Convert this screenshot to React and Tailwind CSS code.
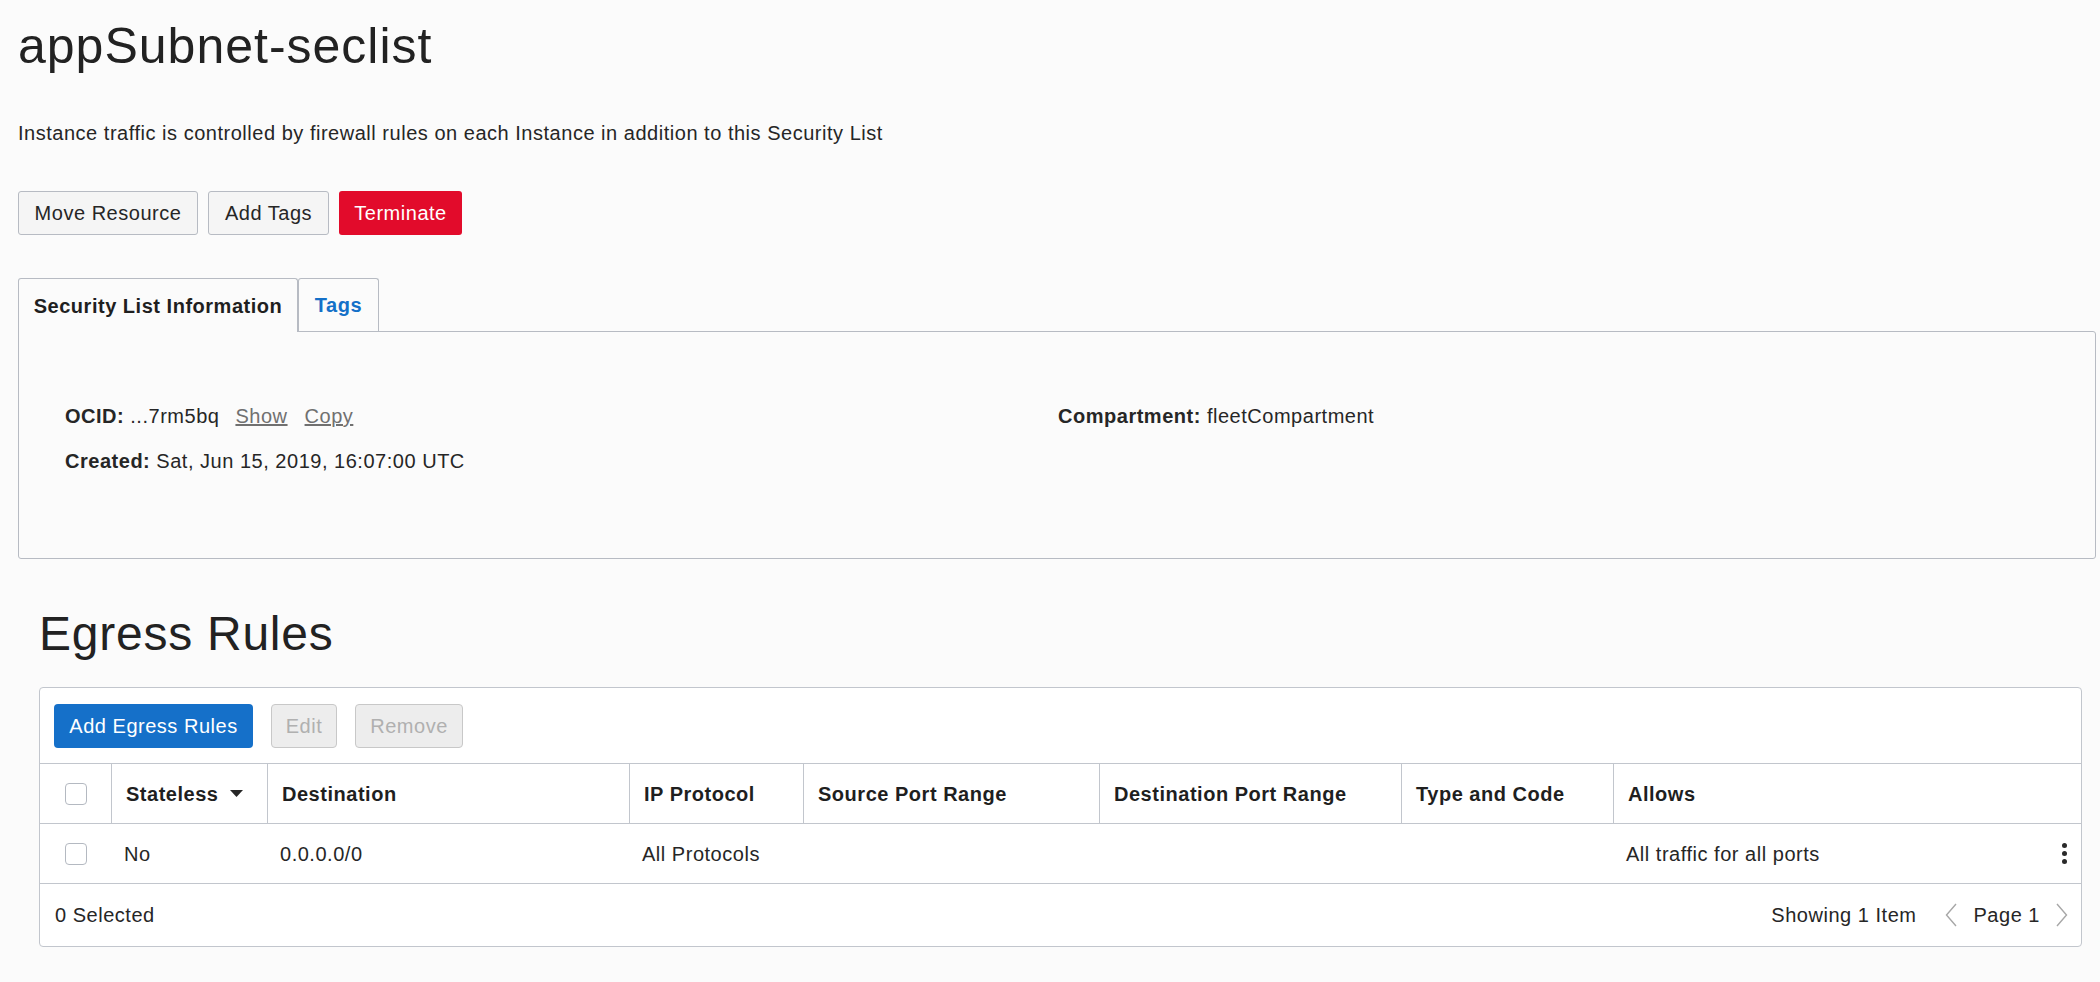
import React from "react";

const Checkbox = () => (
  <span className="block w-[22px] h-[22px] rounded-[4px] border border-[#b4b9c1] bg-white"></span>
);

const Chevron = ({ dir }) => (
  <svg width="12" height="24" viewBox="0 0 12 24" fill="none">
    <path
      d={dir === "left" ? "M11 1 L1.5 12 L11 23" : "M1 1 L10.5 12 L1 23"}
      stroke="#a7a7a7"
      strokeWidth="1.4"
    />
  </svg>
);

const columns = [
  { label: "Stateless", width: "w-[156px]", sort: true },
  { label: "Destination", width: "w-[362px]" },
  { label: "IP Protocol", width: "w-[174px]" },
  { label: "Source Port Range", width: "w-[296px]" },
  { label: "Destination Port Range", width: "w-[302px]" },
  { label: "Type and Code", width: "w-[212px]" },
];

const App = () => {
  return (
    <div className="min-h-screen bg-[#fbfbfb] text-[#262626] font-['Liberation_Sans',Arial,sans-serif] tracking-[0.52px]">
      <div className="pl-[18px] pr-[4px]">
        <h1 className="pt-[17px] text-[50px] leading-[58px] tracking-[1px] text-[#222]">
          appSubnet-seclist
        </h1>
        <p className="mt-[46px] text-[20px] leading-[24px]">
          Instance traffic is controlled by firewall rules on each Instance in addition to this Security List
        </p>

        <div className="mt-[46px] flex gap-[10px]">
          <button className="w-[180px] h-[44px] rounded-[3px] border border-[#b7bbc3] bg-[#f5f5f5] text-[20px] text-[#262626]">
            Move Resource
          </button>
          <button className="w-[121px] h-[44px] rounded-[3px] border border-[#b7bbc3] bg-[#f5f5f5] text-[20px] text-[#262626]">
            Add Tags
          </button>
          <button className="w-[123px] h-[44px] rounded-[3px] bg-[#e20b2b] text-[20px] text-white">
            Terminate
          </button>
        </div>

        <div className="mt-[43px] flex">
          <div className="relative z-10 -mb-px w-[280px] h-[54px] flex items-center justify-center rounded-t-[3px] border-t border-l border-r border-[#b7bbc3] bg-[#fbfbfb] text-[20px] font-bold text-[#1f1f1f]">
            Security List Information
          </div>
          <div className="w-[81px] h-[53px] flex items-center justify-center rounded-t-[3px] border-t border-l border-r border-[#b7bbc3] text-[20px] font-bold text-[#1470c8]">
            Tags
          </div>
        </div>
        <div className="border border-[#b7bbc3] rounded-b-[3px] rounded-tr-[3px] pl-[46px] pt-[72px] pb-[85px] text-[20px] leading-[24px]">
          <div className="flex">
            <div className="w-[993px] flex items-baseline">
              <span className="font-bold">OCID:</span>
              <span className="ml-[6px]">...7rm5bq</span>
              <span className="ml-[16px] underline text-[#707070]">Show</span>
              <span className="ml-[17px] underline text-[#707070]">Copy</span>
            </div>
            <div>
              <span className="font-bold">Compartment:</span>
              <span className="ml-[6px]">fleetCompartment</span>
            </div>
          </div>
          <div className="mt-[21px]">
            <span className="font-bold">Created:</span>
            <span className="ml-[6px]">Sat, Jun 15, 2019, 16:07:00 UTC</span>
          </div>
        </div>
      </div>

      <div className="pl-[39px] pr-[18px] pb-[37px]">
        <h2 className="mt-[47px] text-[48px] leading-[56px] tracking-[0.75px] text-[#222]">
          Egress Rules
        </h2>

        <div className="mt-[25px] border border-[#c2c6cd] rounded-[4px] bg-white text-[20px]">
          <div className="flex gap-[18px] pl-[14px] pt-[16px] pb-[15px]">
            <button className="w-[199px] h-[44px] rounded-[4px] bg-[#1570c9] text-white text-[20px]">
              Add Egress Rules
            </button>
            <button className="w-[66px] h-[44px] rounded-[4px] border border-[#c8c8c8] bg-[#ededed] text-[#b0b0b0] text-[20px]">
              Edit
            </button>
            <button className="w-[108px] h-[44px] rounded-[4px] border border-[#c8c8c8] bg-[#ededed] text-[#b0b0b0] text-[20px]">
              Remove
            </button>
          </div>

          <div className="flex h-[60px] border-t border-[#c2c6cd] font-bold text-[#1f1f1f]">
            <div className="w-[71px] flex items-center justify-center">
              <Checkbox />
            </div>
            {columns.map((c) => (
              <div
                key={c.label}
                className={`${c.width} flex items-center border-l border-[#c2c6cd] pl-[14px]`}
              >
                {c.label}
                {c.sort && (
                  <svg className="ml-[11px]" width="13" height="7" viewBox="0 0 13 7">
                    <path d="M0 0 L13 0 L6.5 7 Z" fill="#262626" />
                  </svg>
                )}
              </div>
            ))}
            <div className="flex-1 flex items-center border-l border-[#c2c6cd] pl-[14px]">Allows</div>
          </div>

          <div className="flex h-[60px] border-t border-[#c2c6cd]">
            <div className="w-[71px] flex items-center justify-center">
              <Checkbox />
            </div>
            <div className="w-[156px] flex items-center pl-[13px]">No</div>
            <div className="w-[362px] flex items-center pl-[13px]">0.0.0.0/0</div>
            <div className="w-[174px] flex items-center pl-[13px]">All Protocols</div>
            <div className="w-[296px]"></div>
            <div className="w-[302px]"></div>
            <div className="w-[212px]"></div>
            <div className="flex-1 flex items-center justify-between pl-[13px] pr-[14px]">
              <span>All traffic for all ports</span>
              <span className="flex flex-col gap-[3px]">
                <span className="block w-[5px] h-[5px] rounded-full bg-[#2a2a2a]"></span>
                <span className="block w-[5px] h-[5px] rounded-full bg-[#2a2a2a]"></span>
                <span className="block w-[5px] h-[5px] rounded-full bg-[#2a2a2a]"></span>
              </span>
            </div>
          </div>

          <div className="flex items-center justify-between h-[63px] border-t border-[#c2c6cd] pl-[15px] pr-[13px]">
            <span>0 Selected</span>
            <div className="flex items-center">
              <span>Showing 1 Item</span>
              <span className="ml-[29px]">
                <Chevron dir="left" />
              </span>
              <span className="ml-[16px]">Page 1</span>
              <span className="ml-[16px]">
                <Chevron dir="right" />
              </span>
            </div>
          </div>
        </div>
      </div>
    </div>
  );
};

export default App;
